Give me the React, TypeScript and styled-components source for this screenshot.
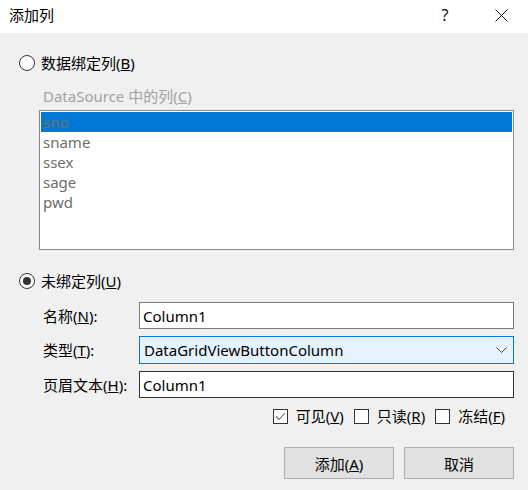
import React from "react";
import styled, { createGlobalStyle } from "styled-components";

const Global = createGlobalStyle`
  html, body { margin: 0; padding: 0; background: #f0f0f0; }
  body { font-family: "Noto Sans", "Noto Sans CJK SC", sans-serif; font-size: 15px; color: #000; }
  * { box-sizing: border-box; }
`;

const Window = styled.div`
  width: 528px;
  height: 490px;
  background: #f0f0f0;
  display: flex;
  flex-direction: column;
  overflow: hidden;
`;

const TitleBar = styled.div`
  height: 33px;
  background: #fff;
  display: flex;
  align-items: center;
  padding-left: 9px;
  padding-right: 4px;
`;

const Title = styled.div`
  flex: 1;
  font-size: 15px;
  line-height: 20px;
  margin-top: -3px;
`;

const TitleButton = styled.div<{ $w: number }>`
  width: ${(p) => p.$w}px;
  height: 33px;
  display: flex;
  align-items: center;
  justify-content: center;
  font-size: 16px;
  color: #111;
  margin-top: -3px;
`;

const Body = styled.div`
  flex: 1;
  display: flex;
  flex-direction: column;
  padding: 0 14px 0 19px;
`;

const RadioRow = styled.label<{ $mt: number }>`
  display: flex;
  align-items: center;
  height: 20px;
  margin-top: ${(p) => p.$mt}px;
  line-height: 20px;
`;

const RadioCircle = styled.span<{ $checked?: boolean }>`
  width: 16px;
  height: 16px;
  border-radius: 50%;
  border: 1px solid #333;
  background: #fff;
  margin-right: 6px;
  display: flex;
  align-items: center;
  justify-content: center;
  &::after {
    content: "";
    display: ${(p) => (p.$checked ? "block" : "none")};
    width: 8px;
    height: 8px;
    border-radius: 50%;
    background: #333;
  }
`;

const GroupLabel = styled.div`
  margin-top: 13px;
  padding-left: 24px;
  height: 20px;
  line-height: 20px;
  color: #a0a0a0;
`;

const ListBox = styled.div`
  margin-top: 4px;
  margin-left: 20px;
  height: 140px;
  border: 1px solid #828790;
  background: #fff;
  padding: 1px;
`;

const ListItem = styled.div<{ $selected?: boolean }>`
  height: 20px;
  line-height: 20px;
  padding-left: 2px;
  color: #6d6d6d;
  background: ${(p) => (p.$selected ? "#0078d7" : "transparent")};
`;

const FieldGrid = styled.div`
  margin-top: 11px;
  padding-left: 24px;
  display: grid;
  grid-template-columns: 96px 1fr;
  row-gap: 7px;
  align-items: center;
`;

const FieldLabel = styled.div`
  line-height: 20px;
`;

const TextBox = styled.div<{ $dark?: boolean }>`
  height: 27px;
  border: 1px solid ${(p) => (p.$dark ? "#333" : "#7a7a7a")};
  background: #fff;
  padding-left: 3px;
  display: flex;
  align-items: center;
`;

const Combo = styled.div`
  height: 28px;
  border: 1px solid #0078d7;
  background: #e5f1fb;
  padding-left: 4px;
  padding-right: 6px;
  display: flex;
  align-items: center;
  justify-content: space-between;
`;

const CheckRow = styled.div`
  margin-top: 8px;
  display: flex;
  justify-content: flex-end;
  padding-right: 9px;
  gap: 10px;
  height: 20px;
  align-items: center;
`;

const CheckItem = styled.label`
  display: flex;
  align-items: center;
  line-height: 20px;
`;

const CheckBox = styled.span`
  width: 15px;
  height: 15px;
  border: 1px solid #333;
  background: #fff;
  margin-right: 8px;
  display: flex;
  align-items: center;
  justify-content: center;
`;

const ButtonRow = styled.div`
  margin-top: 21px;
  display: flex;
  justify-content: flex-end;
  gap: 10px;
`;

const Button = styled.button`
  width: 110px;
  height: 32px;
  border: 1px solid #adadad;
  background: #e1e1e1;
  font-family: inherit;
  font-size: 15px;
  color: #000;
  padding: 0;
`;

const Check = () => (
  <svg width="11" height="9" viewBox="0 0 11 9">
    <path d="M1 4.5 L4 7.5 L10 1" fill="none" stroke="#666" strokeWidth="1.1" />
  </svg>
);

const Chevron = () => (
  <svg width="11" height="6" viewBox="0 0 11 6">
    <path d="M0.5 0.5 L5.5 5.5 L10.5 0.5" fill="none" stroke="#444" strokeWidth="1" />
  </svg>
);

const Close = () => (
  <svg width="13" height="13" viewBox="0 0 13 13">
    <path d="M0.5 0.5 L12.5 12.5 M12.5 0.5 L0.5 12.5" stroke="#111" strokeWidth="1" />
  </svg>
);

export default function App() {
  const items = ["sno", "sname", "ssex", "sage", "pwd"];
  return (
    <Window>
      <Global />
      <TitleBar>
        <Title>添加列</Title>
        <TitleButton $w={66}>?</TitleButton>
        <TitleButton $w={46}>
          <Close />
        </TitleButton>
      </TitleBar>
      <Body>
        <RadioRow $mt={20}>
          <RadioCircle />
          <span>
            数据绑定列(<u>B</u>)
          </span>
        </RadioRow>
        <GroupLabel>
          DataSource 中的列(<u>C</u>)
        </GroupLabel>
        <ListBox>
          {items.map((it, i) => (
            <ListItem key={it} $selected={i === 0}>
              {it}
            </ListItem>
          ))}
        </ListBox>
        <RadioRow $mt={21}>
          <RadioCircle $checked />
          <span>
            未绑定列(<u>U</u>)
          </span>
        </RadioRow>
        <FieldGrid>
          <FieldLabel>
            名称(<u>N</u>):
          </FieldLabel>
          <TextBox>Column1</TextBox>
          <FieldLabel>
            类型(<u>T</u>):
          </FieldLabel>
          <Combo>
            <span>DataGridViewButtonColumn</span>
            <Chevron />
          </Combo>
          <FieldLabel>
            页眉文本(<u>H</u>):
          </FieldLabel>
          <TextBox $dark>Column1</TextBox>
        </FieldGrid>
        <CheckRow>
          <CheckItem>
            <CheckBox>
              <Check />
            </CheckBox>
            可见(<u>V</u>)
          </CheckItem>
          <CheckItem>
            <CheckBox />
            只读(<u>R</u>)
          </CheckItem>
          <CheckItem>
            <CheckBox />
            冻结(<u>F</u>)
          </CheckItem>
        </CheckRow>
        <ButtonRow>
          <Button>
            添加(<u>A</u>)
          </Button>
          <Button>取消</Button>
        </ButtonRow>
      </Body>
    </Window>
  );
}
